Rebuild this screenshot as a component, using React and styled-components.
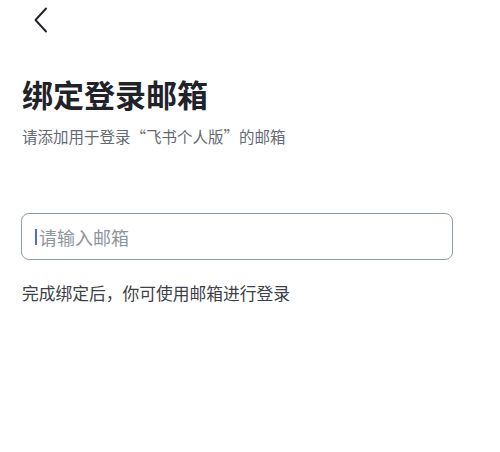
import React, { useState } from "react";
import styled, { createGlobalStyle } from "styled-components";

const GlobalStyle = createGlobalStyle`
  body {
    margin: 0;
    background: #ffffff;
    font-family: "Noto Sans CJK SC", "Noto Sans", sans-serif;
  }
`;

const BackIcon = () => (
  <svg width="14" height="26" viewBox="0 0 14 26" fill="none">
    <path
      d="M12 1.5 L1.5 13 L12 24.5"
      stroke="#1f2329"
      strokeWidth="1.9"
      strokeLinecap="round"
      strokeLinejoin="round"
    />
  </svg>
);

const BindEmail = () => {
  const [email, setEmail] = useState("");

  return (
    <Page>
      <TopBar>
        <BackBtn>
          <BackIcon />
        </BackBtn>
      </TopBar>
      <Title>绑定登录邮箱</Title>
      <SubTitle>请添加用于登录“飞书个人版”的邮箱</SubTitle>
      <InputBox>
        <Caret />
        <EmailInput
          value={email}
          placeholder="请输入邮箱"
          onChange={(e) => setEmail(e.target.value)}
        />
      </InputBox>
      <Hint>完成绑定后，你可使用邮箱进行登录</Hint>
    </Page>
  );
};

const Page = styled.div`
  width: 500px;
  height: 452px;
  box-sizing: border-box;
  padding: 0 22px;
  display: flex;
  flex-direction: column;
  background: #ffffff;
`;

const TopBar = styled.div`
  height: 39px;
  display: flex;
  align-items: center;
`;

const BackBtn = styled.div`
  margin-left: 12px;
  display: flex;
  align-items: center;
  cursor: pointer;
`;

const Title = styled.h1`
  margin: 33px 0 0;
  font-size: 31px;
  line-height: 44px;
  font-weight: 700;
  color: #1f2329;
`;

const SubTitle = styled.div`
  margin-top: 9px;
  font-size: 15.5px;
  line-height: 22px;
  color: #646a73;
`;

const InputBox = styled.div`
  margin-top: 66px;
  margin-left: -1px;
  width: 432px;
  height: 47px;
  box-sizing: border-box;
  border: 1.5px solid #8e9bb5;
  border-radius: 8px;
  display: flex;
  align-items: center;
  padding: 0 13px;
`;

const Caret = styled.div`
  width: 2px;
  height: 16px;
  background: #4e6ad4;
  margin-right: 2px;
  margin-top: 1px;
`;

const EmailInput = styled.input`
  flex: 1;
  border: none;
  outline: none;
  padding: 0;
  background: transparent;
  font-family: "Noto Sans CJK SC", "Noto Sans", sans-serif;
  font-size: 18px;
  color: #1f2329;
  caret-color: transparent;
  &::placeholder {
    color: #8f959e;
  }
`;

const Hint = styled.div`
  margin-top: 22px;
  font-size: 16.75px;
  line-height: 22px;
  color: #3c4048;
`;

const App = () => (
  <>
    <GlobalStyle />
    <BindEmail />
  </>
);

export default App;
